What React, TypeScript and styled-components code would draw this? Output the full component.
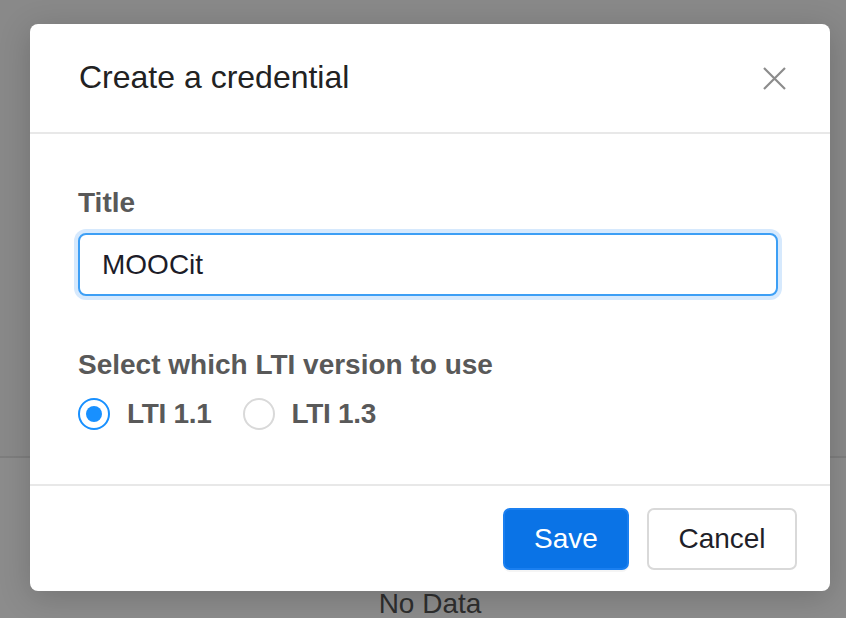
import * as React from 'react'
import styled, { createGlobalStyle } from 'styled-components'

const GlobalStyle = createGlobalStyle`
  html, body {
    margin: 0;
    padding: 0;
    width: 846px;
    height: 618px;
    overflow: hidden;
    font-family: "Liberation Sans", Arial, sans-serif;
  }
`

const Page = styled.div`
  position: relative;
  width: 846px;
  height: 618px;
  background: #ffffff;
  display: flex;
  flex-direction: column;
`

const TableHead = styled.div`
  height: 456px;
  background: #fafafa;
  border-bottom: 2px solid #e6e6e6;
  flex-shrink: 0;
`

const Empty = styled.div`
  flex: 1;
  display: flex;
  justify-content: center;
  align-items: flex-end;
  font-size: 28px;
  line-height: 30px;
  color: #555;
  padding-left: 14px;
  margin-bottom: -1px;
`

const Mask = styled.div`
  position: absolute;
  inset: 0;
  background: rgba(0, 0, 0, 0.45);
`

const Dialog = styled.div`
  position: absolute;
  left: 30px;
  top: 24px;
  width: 800px;
  background: #fff;
  border-radius: 8px;
  box-shadow: 0 6px 32px rgba(0, 0, 0, 0.18);
  display: flex;
  flex-direction: column;
`

const Header = styled.div`
  height: 108px;
  padding: 0 44px 0 49px;
  border-bottom: 2px solid #e8e8e8;
  display: flex;
  align-items: center;
  justify-content: space-between;
`

const Title = styled.div`
  font-size: 32px;
  color: #222;
  margin-bottom: 2px;
`

const Close = styled.button`
  border: none;
  background: none;
  padding: 0;
  width: 24px;
  height: 24px;
  cursor: pointer;
  display: flex;
  align-items: center;
  justify-content: center;
`

const Body = styled.div`
  padding: 48px 52px 42px 48px;
  display: flex;
  flex-direction: column;
`

const Label = styled.div<{ $gap: number }>`
  font-size: 28px;
  line-height: 42px;
  font-weight: bold;
  color: #595959;
  margin-bottom: ${(p) => p.$gap}px;
`

const Input = styled.input`
  box-sizing: border-box;
  width: 700px;
  height: 63px;
  border: 2px solid #3d9ff5;
  border-radius: 8px;
  box-shadow: 0 0 0 4px #d6e9fd;
  padding: 0 22px;
  font-family: inherit;
  font-size: 28px;
  color: #1c1c28;
  outline: none;
  margin-bottom: 48px;
`

const RadioRow = styled.div`
  height: 56px;
  display: flex;
  align-items: center;
  gap: 31px;
`

const RadioOption = styled.label`
  display: flex;
  align-items: center;
  gap: 17px;
  font-size: 28px;
  font-weight: bold;
  color: #595959;
  letter-spacing: -0.3px;
  cursor: pointer;
`

const RadioCircle = styled.span<{ $checked: boolean }>`
  box-sizing: border-box;
  width: 32px;
  height: 32px;
  border-radius: 50%;
  border: 2px solid ${(p) => (p.$checked ? '#1890ff' : '#d9d9d9')};
  display: flex;
  align-items: center;
  justify-content: center;
  &::after {
    content: '';
    width: 16px;
    height: 16px;
    border-radius: 50%;
    background: #1890ff;
    display: ${(p) => (p.$checked ? 'block' : 'none')};
  }
`

const Footer = styled.div`
  border-top: 2px solid #e8e8e8;
  padding: 22px 33px 21px;
  display: flex;
  justify-content: flex-end;
  gap: 18px;
`

const Button = styled.button<{ $primary?: boolean }>`
  box-sizing: border-box;
  height: 62px;
  width: ${(p) => (p.$primary ? 126 : 150)}px;
  padding: 0;
  border-radius: 7px;
  font-family: inherit;
  font-size: 28px;
  cursor: pointer;
  border: 2px solid ${(p) => (p.$primary ? '#1a7ff0' : '#d9d9d9')};
  background: ${(p) => (p.$primary ? '#0a73e6' : '#fff')};
  color: ${(p) => (p.$primary ? '#fff' : '#1f1f29')};
  box-shadow: ${(p) => (p.$primary ? '0 2px 0 rgba(0,0,0,0.04)' : 'none')};
`

export default function App() {
  const [version, setVersion] = React.useState('1.1')
  const [title, setTitle] = React.useState('MOOCit')

  return (
    <Page>
      <GlobalStyle />
      <TableHead />
      <Empty>No Data</Empty>
      <Mask />
      <Dialog>
        <Header>
          <Title>Create a credential</Title>
          <Close aria-label="Close">
            <svg width="23" height="23" viewBox="0 0 23 23">
              <path d="M1 1L22 22M22 1L1 22" stroke="#8c8c8c" strokeWidth="2.2" />
            </svg>
          </Close>
        </Header>
        <Body>
          <Label $gap={9}>Title</Label>
          <Input value={title} onChange={(e) => setTitle(e.target.value)} />
          <Label $gap={0}>Select which LTI version to use</Label>
          <RadioRow>
            {['1.1', '1.3'].map((v) => (
              <RadioOption key={v} onClick={() => setVersion(v)}>
                <RadioCircle $checked={version === v} />
                LTI {v}
              </RadioOption>
            ))}
          </RadioRow>
        </Body>
        <Footer>
          <Button $primary>Save</Button>
          <Button>Cancel</Button>
        </Footer>
      </Dialog>
    </Page>
  )
}
